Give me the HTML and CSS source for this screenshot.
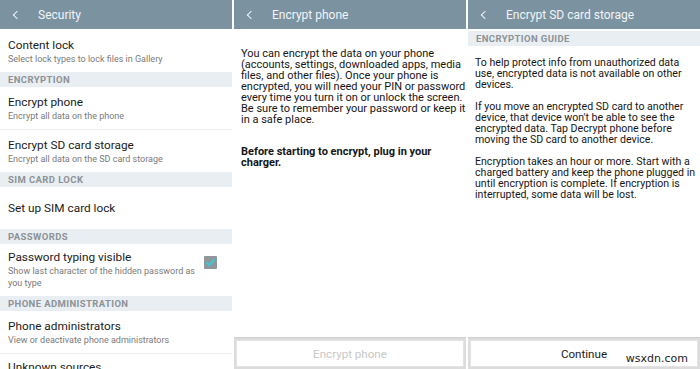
FILE: index.html
```html
<!DOCTYPE html>
<html lang="en">
    <head>
        <meta charset="UTF-8" />
        <meta name="viewport" content="width=device-width, initial-scale=1" />
        <link rel="stylesheet" href="styles.css">
        <title>Security - Encryption</title>
    </head>

    <body>
        <main class="screens">
            <!-- Security settings list -->
            <section class="screen">
                <header class="app-bar">
                    <span class="back"></span>
                    <h1>Security</h1>
                </header>
                <ul class="settings">
                    <li class="item first">
                        <p class="title">Content lock</p>
                        <p class="sub">Select lock types to lock files in Gallery</p>
                    </li>
                    <li class="group">Encryption</li>
                    <li class="item divided">
                        <p class="title">Encrypt phone</p>
                        <p class="sub">Encrypt all data on the phone</p>
                    </li>
                    <li class="item">
                        <p class="title">Encrypt SD card storage</p>
                        <p class="sub">Encrypt all data on the SD card storage</p>
                    </li>
                    <li class="group">SIM card lock</li>
                    <li class="item single">
                        <p class="title">Set up SIM card lock</p>
                    </li>
                    <li class="group">Passwords</li>
                    <li class="item with-check">
                        <div>
                            <p class="title">Password typing visible</p>
                            <p class="sub">Show last character of the hidden password as you type</p>
                        </div>
                        <span class="check on"></span>
                    </li>
                    <li class="group">Phone administration</li>
                    <li class="item divided">
                        <p class="title">Phone administrators</p>
                        <p class="sub">View or deactivate phone administrators</p>
                    </li>
                    <li class="item with-check">
                        <div>
                            <p class="title">Unknown sources</p>
                        </div>
                        <span class="check low"></span>
                    </li>
                </ul>
            </section>

            <!-- Encrypt phone -->
            <section class="screen">
                <header class="app-bar">
                    <span class="back"></span>
                    <h1>Encrypt phone</h1>
                </header>
                <div class="body">
                    <p>You can encrypt the data on your phone<br>
                    (accounts, settings, downloaded apps, media<br>
                    files, and other files). Once your phone is<br>
                    encrypted, you will need your PIN or password<br>
                    every time you turn it on or unlock the screen.<br>
                    Be sure to remember your password or keep it<br>
                    in a safe place.</p>
                    <p class="strong">Before starting to encrypt, plug in your<br>
                    charger.</p>
                </div>
                <footer class="actions">
                    <button class="disabled">Encrypt phone</button>
                </footer>
            </section>

            <!-- Encrypt SD card -->
            <section class="screen">
                <header class="app-bar">
                    <span class="back"></span>
                    <h1>Encrypt SD card storage</h1>
                </header>
                <div class="group guide">Encryption guide</div>
                <div class="body narrow">
                    <p>To help protect info from unauthorized data<br>
                    use, encrypted data is not available on other<br>
                    devices.</p>
                    <p>If you move an encrypted SD card to another<br>
                    device, that device won't be able to see the<br>
                    encrypted data. Tap Decrypt phone before<br>
                    moving the SD card to another device.</p>
                    <p>Encryption takes an hour or more. Start with a<br>
                    charged battery and keep the phone plugged in<br>
                    until encryption is complete. If encryption is<br>
                    interrupted, some data will be lost.</p>
                </div>
                <footer class="actions">
                    <button>Continue</button>
                </footer>
                <span class="watermark">wsxdn.com</span>
            </section>
        </main>
    </body>
</html>
```

FILE: styles.css
```css
* {
    box-sizing: border-box;
}

html,
body {
    margin: 0;
    height: 369px;
    overflow: hidden;
    background: white;
    font-family: Roboto, "Liberation Sans", sans-serif;
    color: #1e1e1e;
}

p {
    margin: 0;
}

.screens {
    display: grid;
    grid-template-columns: 232px 232px 232px;
    gap: 2px;
    height: 369px;
}

.screen {
    position: relative;
    display: flex;
    flex-direction: column;
    height: 369px;
    overflow: hidden;
}

/* top bar */
.app-bar {
    flex: none;
    height: 29px;
    background-color: #7b92a1;
    display: flex;
    align-items: center;
    padding-left: 14px;
}

.app-bar h1 {
    margin: 0 0 0 18px;
    font-size: 12px;
    font-weight: 400;
    color: #f1f5f8;
}

.back {
    width: 6px;
    height: 6px;
    border-left: 1.5px solid #f1f5f8;
    border-bottom: 1.5px solid #f1f5f8;
    transform: rotate(45deg);
}

/* settings list */
.settings {
    list-style: none;
    margin: 0;
    padding: 0;
}

.group {
    flex: none;
    height: 15px;
    padding-left: 8px;
    background-color: #e9eef2;
    color: #8c9297;
    font-size: 9.5px;
    font-weight: 700;
    text-transform: uppercase;
    line-height: 15px;
    letter-spacing: 0.4px;
}

.item {
    padding: 8px 8px 7px;
    min-height: 42px;
}

.item.first {
    min-height: 43px;
    padding-top: 9px;
}

.item.divided {
    border-bottom: 1px solid #eceff1;
}

.item.single {
    display: flex;
    align-items: center;
}

.item.with-check {
    display: flex;
    justify-content: space-between;
    align-items: flex-start;
    padding-top: 6px;
}

.item.with-check > div {
    max-width: 192px;
}

.title {
    font-size: 11.8px;
    line-height: 15px;
    color: #1b1b1b;
}

.sub {
    font-size: 9px;
    line-height: 12px;
    color: #7a7a7a;
}

.check {
    position: relative;
    flex: none;
    width: 13px;
    height: 13px;
    margin: 6px 7px 0 0;
    border-radius: 1px;
    background-color: #8e979c;
}

.check.on::after {
    content: "";
    position: absolute;
    left: 4px;
    top: 1px;
    width: 3px;
    height: 7px;
    border-right: 2px solid #3fc9d3;
    border-bottom: 2px solid #3fc9d3;
    transform: rotate(40deg);
}

.check.low {
    margin-top: 12px;
}

/* text screens */
.guide {
    margin-top: 2px;
}

.body {
    flex: 1;
    padding: 19px 4px 0 7px;
    font-size: 11px;
    line-height: 11px;
    color: #161616;
    white-space: nowrap;
}

.body.narrow {
    font-size: 10.6px;
}

.guide + .body {
    padding-top: 11px;
}

.body p + p {
    margin-top: 11px;
}

.body .strong {
    margin-top: 21px;
    font-weight: 700;
}

.actions {
    flex: none;
    height: 32px;
    padding: 2px;
    background-color: #dcdcdc;
    border-top: 1px solid #cfcfcf;
}

.actions button {
    width: 100%;
    height: 100%;
    border: 1px solid #e4e4e4;
    background: white;
    font-family: inherit;
    font-size: 11.6px;
    color: #1b1b1b;
}

.actions button.disabled {
    color: #c8c8c8;
}

.watermark {
    position: absolute;
    right: 12px;
    bottom: 4px;
    font-family: "DejaVu Sans", sans-serif;
    font-size: 11px;
    color: #1b1b1b;
}
```
